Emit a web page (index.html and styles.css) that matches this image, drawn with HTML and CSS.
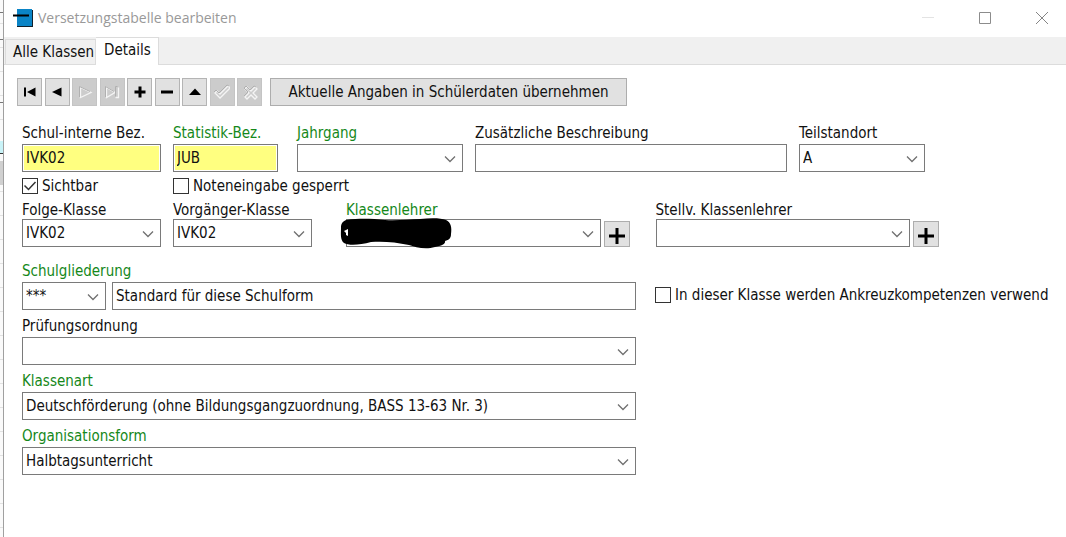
FILE: index.html
```html
<!DOCTYPE html>
<html lang="de">
<head>
    <meta charset="UTF-8">
    <meta name="viewport" content="width=device-width, initial-scale=1.0">
    <title>Versetzungstabelle bearbeiten</title>
    <link rel="stylesheet" href="styles.css">
</head>
<body>

    <!-- Fenster dahinter -->
    <div class="backdrop">
        <span class="line-dark"></span>
        <span class="line-dark"></span>
        <span class="line-dark"></span>
        <span class="mark"></span>
        <span class="row-selected"></span>
    </div>

    <div class="window">
        <!-- Titelleiste -->
        <header class="titlebar">
            <svg class="app-icon" width="20" height="18" viewBox="0 0 20 18">
                <rect x="4" y="1" width="16" height="17" fill="#10202c"/>
                <rect x="4" y="0" width="15" height="17" fill="#0a84c6"/>
                <path d="M0 6.500H16" stroke="#000" stroke-width="2"/>
            </svg>
            <h1>Versetzungstabelle bearbeiten</h1>
            <div class="window-buttons">
                <button type="button" aria-label="Minimieren" disabled>
                    <svg width="12" height="12" viewBox="0 0 12 12"><path d="M0 5.500H12" stroke="#e3e3e3"/></svg>
                </button>
                <button type="button" aria-label="Maximieren">
                    <svg width="12" height="12" viewBox="0 0 12 12"><path d="M.5 .5H11.500V11.500H.5Z" fill="none" stroke="#8c8c8c"/></svg>
                </button>
                <button type="button" aria-label="Schließen">
                    <svg width="12" height="12" viewBox="0 0 12 12"><path d="M0 0L12 12M12 0L0 12" stroke="#858585"/></svg>
                </button>
            </div>
        </header>

        <!-- Reiter -->
        <nav class="tabs" role="tablist">
            <button type="button" class="tab" role="tab">Alle Klassen</button>
            <button type="button" class="tab active" role="tab" aria-selected="true">Details</button>
        </nav>

        <main class="panel">
            <div class="toolbar">
                <div class="navigator">
                    <button type="button" aria-label="Erster">
                        <svg viewBox="0 0 16 16"><path d="M2 3.500h2v9H2zM13.500 3.500v9L5 8z"/></svg>
                    </button>
                    <button type="button" aria-label="Vorheriger">
                        <svg viewBox="0 0 16 16"><path d="M12.500 3.500v9L3 8z"/></svg>
                    </button>
                    <button type="button" aria-label="Nächster" disabled>
                        <svg viewBox="0 0 16 16"><path class="shine" d="M3.500 3.500v10L14 8.500z"/><path class="dim" d="M2.500 13V2.500L13 7.500"/></svg>
                    </button>
                    <button type="button" aria-label="Letzter" disabled>
                        <svg viewBox="0 0 16 16"><path class="shine" d="M2.500 3.500v10L11 8.500zM11.500 13.500h3v-10"/><path class="dim" d="M1.500 13V2.500L10 7.500M11.500 12.500v-10h2"/></svg>
                    </button>
                    <button type="button" aria-label="Einfügen">
                        <svg viewBox="0 0 16 16"><path d="M6.500 2.500h3v4h4v3h-4v4h-3v-4h-4v-3h4z"/></svg>
                    </button>
                    <button type="button" aria-label="Löschen">
                        <svg viewBox="0 0 16 16"><path d="M2 6.500h12v3H2z"/></svg>
                    </button>
                    <button type="button" aria-label="Bearbeiten">
                        <svg viewBox="0 0 16 16"><path d="M2 11L8 4.500L14 11z"/></svg>
                    </button>
                    <button type="button" aria-label="Speichern" disabled>
                        <svg viewBox="0 0 16 16"><path class="shine" d="M1 9l2-2 3 3 8-8 2 2L6 14z"/><path class="dim" d="M0 8l2-2 3 3 8-8 2 1"/></svg>
                    </button>
                    <button type="button" aria-label="Abbrechen" disabled>
                        <svg viewBox="0 0 16 16"><path class="shine" d="M3 5l2-2 4 4 4-4 2 2-4 4 4 4-2 2-4-4-4 4-2-2 4-4z"/><path class="dim" d="M6 8L2 4l2-2 4 4 4-4 2 1M2 12l4-4"/></svg>
                    </button>
                </div>
                <button type="button" class="btn-action">Aktuelle Angaben in Schülerdaten übernehmen</button>
            </div>

            <form class="form">
                <!-- Bezeichnungen -->
                <div class="row row-names">
                    <div class="field">
                        <label for="bez">Schul-interne Bez.</label>
                        <input type="text" id="bez" class="required" value="IVK02">
                    </div>
                    <div class="field">
                        <label for="statistik" class="green">Statistik-Bez.</label>
                        <input type="text" id="statistik" class="required" value="JUB">
                    </div>
                    <div class="field field-year">
                        <label for="jahrgang" class="green">Jahrgang</label>
                        <select id="jahrgang"><option></option></select>
                    </div>
                    <div class="field">
                        <label for="beschreibung">Zusätzliche Beschreibung</label>
                        <input type="text" id="beschreibung">
                    </div>
                    <div class="field">
                        <label for="teilstandort">Teilstandort</label>
                        <select id="teilstandort"><option>A</option></select>
                    </div>
                </div>

                <div class="row row-checks">
                    <label class="check"><input type="checkbox" checked>Sichtbar</label>
                    <label class="check"><input type="checkbox">Noteneingabe gesperrt</label>
                </div>

                <!-- Klassen und Lehrer -->
                <div class="row row-teachers">
                    <div class="field">
                        <label for="folge">Folge-Klasse</label>
                        <select id="folge"><option>IVK02</option></select>
                    </div>
                    <div class="field">
                        <label for="vorgaenger">Vorgänger-Klasse</label>
                        <select id="vorgaenger"><option>IVK02</option></select>
                    </div>
                    <div class="teachers">
                        <div class="field">
                            <label for="lehrer" class="green">Klassenlehrer</label>
                            <div class="with-button">
                                <select id="lehrer"><option></option></select>
                                <button type="button" class="btn-add" aria-label="Klassenlehrer hinzufügen">
                                    <svg width="16" height="16" viewBox="0 0 16 16"><path d="M0 8H16M8 0V16" stroke="#000" stroke-width="3"/></svg>
                                </button>
                                <svg class="redaction" width="112" height="32" viewBox="0 0 112 32">
                                    <path d="M6 2C22 0 32 1 45 2C58 3 69 1 80 1C91 0 101 0 106 2C111 4 112 10 111 16C111 20 109 22 105 23C106 26 101 28 95 29C85 32 75 29 69 27C56 24 42 23 31 24C20 27 9 28 4 25C0 22 1 15 1 10C1 6 2 4 6 2Z"/>
                                    <path d="M4 13L8 11V18L6 17V15Z" fill="#fff"/>
                                </svg>
                            </div>
                        </div>
                        <div class="field">
                            <label for="stellv">Stellv. Klassenlehrer</label>
                            <div class="with-button">
                                <select id="stellv"><option></option></select>
                                <button type="button" class="btn-add" aria-label="Stellvertreter hinzufügen">
                                    <svg width="16" height="16" viewBox="0 0 16 16"><path d="M0 8H16M8 0V16" stroke="#000" stroke-width="3"/></svg>
                                </button>
                            </div>
                        </div>
                    </div>
                </div>

                <!-- Schulform -->
                <div class="details">
                    <div class="stack">
                        <div class="field">
                            <label for="gliederung" class="green">Schulgliederung</label>
                            <div class="pair">
                                <select id="gliederung"><option>***</option></select>
                                <input type="text" value="Standard für diese Schulform" aria-label="Schulgliederung Text" readonly>
                            </div>
                        </div>
                        <div class="field">
                            <label for="pruefung">Prüfungsordnung</label>
                            <select id="pruefung"><option></option></select>
                        </div>
                        <div class="field">
                            <label for="klassenart" class="green">Klassenart</label>
                            <select id="klassenart"><option>Deutschförderung (ohne Bildungsgangzuordnung, BASS 13-63 Nr. 3)</option></select>
                        </div>
                        <div class="field">
                            <label for="orgform" class="green">Organisationsform</label>
                            <select id="orgform"><option>Halbtagsunterricht</option></select>
                        </div>
                    </div>
                    <label class="check"><input type="checkbox">In dieser Klasse werden Ankreuzkompetenzen verwend</label>
                </div>
            </form>
        </main>
    </div>

</body>
</html>
```

FILE: styles.css
```css
* {
    box-sizing: border-box;
}
body {
    margin: 0;
    min-height: 100vh;
    display: flex;
    background-color: #fff;
    color: #111;
    font-family: "DejaVu Sans Condensed", "Noto Sans", sans-serif;
    font-size: 15px;
    line-height: 20px;
}
button, input, select {
    font: inherit;
    color: inherit;
    margin: 0;
}
.backdrop {
    width: 4px;
    flex-shrink: 0;
    display: flex;
    flex-direction: column;
    background: repeating-linear-gradient(#fafafa 0 23px, #e2e2e2 23px 24px);
    border-right: 1px solid #a0a0a0;
}
.line-dark {
    height: 1px;
    margin-top: 12px;
    background-color: #777;
}
.line-dark + .line-dark {
    margin-top: 26px;
}
.line-dark:nth-child(3) {
    margin-top: 62px;
}
.mark {
    height: 13px;
    margin-top: 38px;
    background-color: #c9f3f8;
    border-bottom: 1px solid #333;
}
.row-selected {
    height: 24px;
    margin-top: 7px;
    background-color: #d0d0d0;
}
.window {
    flex: 1;
    min-width: 0;
}

/* Titelleiste */
.titlebar {
    display: flex;
    align-items: center;
    height: 37px;
    padding: 0 0 2px 9px;
}
.app-icon {
    flex-shrink: 0;
}
.titlebar h1 {
    flex: 1;
    margin: 0 0 0 5px;
    font-family: "Open Sans", "Noto Sans", sans-serif;
    font-size: 14px;
    font-weight: normal;
    color: #999;
}
.window-buttons {
    display: flex;
}
.window-buttons button {
    display: flex;
    justify-content: center;
    align-items: center;
    width: 57px;
    height: 34px;
    padding: 0 0 0 8px;
    border: none;
    background: none;
}

/* Reiter */
.tabs {
    display: flex;
    align-items: flex-end;
    height: 28px;
    padding-left: 1px;
    background-color: #f0f0f0;
    box-shadow: inset 0 -1px #dcdcdc;
}
.tab {
    height: 26px;
    padding: 0 1px 0 7px;
    border: 1px solid #dcdcdc;
    background-color: #f0f0f0;
    white-space: nowrap;
}
.tab.active {
    height: 28px;
    padding: 0 7px 3px 8px;
    border-bottom: none;
    border-left: none;
    background-color: #fff;
}

.panel {
    padding: 13px 11px 0 13px;
}
.toolbar {
    display: flex;
    gap: 8px;
}
.navigator {
    display: flex;
    justify-content: space-between;
    width: 245px;
}
.navigator button {
    display: flex;
    justify-content: center;
    align-items: center;
    width: 25px;
    height: 28px;
    padding: 0;
    border: 1px solid #b4b4b4;
    background-color: #e1e1e1;
}
.navigator button:disabled {
    border-color: #c4c4c4;
    background-color: #cccccc;
}
.navigator svg {
    width: 16px;
    height: 16px;
}
.shine {
    fill: none;
    stroke: #f4f4f4;
    stroke-width: 1.3;
}
.dim {
    fill: none;
    stroke: #b0b0b0;
}
.btn-action {
    width: 357px;
    height: 28px;
    padding: 0;
    border: 1px solid #adadad;
    background-color: #e1e1e1;
    white-space: nowrap;
}

/* Formular */
.form {
    padding: 16px 0 0 5px;
}
.row {
    display: grid;
    column-gap: 12px;
    margin-right: 116px;
}
.row-names {
    grid-template-columns: 139px 105px 173px 1fr 126px;
    margin-right: 130px;
}
.field-year {
    padding-left: 7px;
}
.row-checks {
    grid-template-columns: 139px 1fr;
    margin-top: 4px;
}
.row-teachers {
    grid-template-columns: 139px 139px 1fr;
    margin-top: 3px;
}
.teachers {
    display: grid;
    grid-template-columns: 1fr 1fr;
    column-gap: 26px;
    padding-left: 22px;
}
.field {
    display: flex;
    flex-direction: column;
    gap: 2px;
    min-width: 0;
}
.row-teachers .field {
    gap: 0;
}
.field label {
    padding-top: 2px;
    line-height: 18px;
    white-space: nowrap;
}
.field .green {
    color: #15881a;
}
input[type="text"], select {
    width: 100%;
    height: 28px;
    min-width: 0;
    padding: 0 3px;
    border: 1px solid #7a7a7a;
    border-radius: 0;
    background-color: #fff;
}
select {
    appearance: none;
    padding-right: 24px;
    background-image: url("data:image/svg+xml,%3Csvg xmlns='http://www.w3.org/2000/svg' width='12' height='7'%3E%3Cpath d='M1 .5L6 5.500L11 .5' fill='none' stroke='%23707070' stroke-width='1.300'/%3E%3C/svg%3E");
    background-repeat: no-repeat;
    background-position: right 6px top 11px;
}
input.required {
    background-color: #ffff80;
    box-shadow: inset 0 0 0 1px #fff;
}
.check {
    display: flex;
    align-items: center;
    gap: 4px;
    height: 20px;
    white-space: nowrap;
}
.check input {
    appearance: none;
    flex-shrink: 0;
    width: 16px;
    height: 16px;
    border: 1px solid #333;
    background-color: #fff;
}
.check input:checked {
    background-image: url("data:image/svg+xml,%3Csvg xmlns='http://www.w3.org/2000/svg' width='14' height='14'%3E%3Cpath d='M1.500 6.500L5.500 10.500L12.500 3' fill='none' stroke='%23333' stroke-width='1.500'/%3E%3C/svg%3E");
}
.with-button {
    position: relative;
    display: flex;
    align-items: flex-end;
    gap: 3px;
}
.btn-add {
    display: flex;
    flex-shrink: 0;
    justify-content: center;
    align-items: center;
    width: 26px;
    height: 26px;
    padding: 4px 0 0;
    border: 1px solid #adadad;
    background-color: #e1e1e1;
}
/* geschwärzter Name */
.redaction {
    position: absolute;
    top: -1px;
    left: -6px;
}
.details {
    display: grid;
    grid-template-columns: 614fr 400fr;
    column-gap: 19px;
    margin-top: 13px;
}
.details > .check {
    margin-top: 25px;
    min-width: 0;
}
.stack {
    display: flex;
    flex-direction: column;
    gap: 5px;
}
.pair {
    display: grid;
    grid-template-columns: 84px 1fr;
    gap: 6px;
}
```
